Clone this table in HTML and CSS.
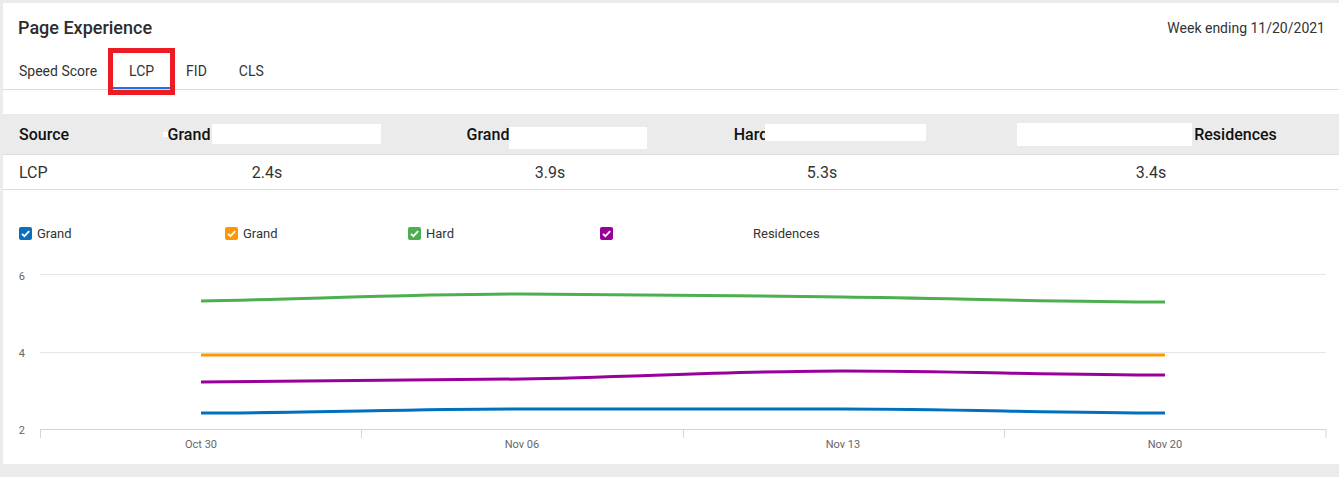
FILE: index.html
```html
<!DOCTYPE html>
<html lang="en">
<head>
<meta charset="utf-8">
<title>Page Experience</title>
<link rel="stylesheet" href="styles.css">
</head>
<body>
<div class="card">
  <div class="card-head">
    <h2 class="title">Page Experience</h2>
    <div class="week">Week ending 11/20/2021</div>
  </div>
  <nav class="tabs">
    <div class="tab">Speed Score</div>
    <div class="tab active">LCP<span class="highlight"></span></div>
    <div class="tab">FID</div>
    <div class="tab">CLS</div>
  </nav>

  <div class="table">
    <div class="trow thead">
      <div class="cell first">Source</div>
      <div class="cell c2"><span class="redact rdot"></span>Grand<span class="redact r1"></span></div>
      <div class="cell c3">Grand<span class="redact r2"></span></div>
      <div class="cell c4">Hard<span class="redact r3"></span></div>
      <div class="cell c5h"><span class="redact r4"></span>Residences</div>
    </div>
    <div class="trow tbody">
      <div class="cell first">LCP</div>
      <div class="cell">2.4s</div>
      <div class="cell">3.9s</div>
      <div class="cell">5.3s</div>
      <div class="cell c5">3.4s</div>
    </div>
  </div>

  <div class="legend">
    <div class="litem"><span class="cb blue"><svg viewBox="0 0 13 13"><path d="M3 6.8l2.4 2.4 4.8-5" /></svg></span>Grand</div>
    <div class="litem"><span class="cb orange"><svg viewBox="0 0 13 13"><path d="M3 6.8l2.4 2.4 4.8-5" /></svg></span>Grand</div>
    <div class="litem"><span class="cb green"><svg viewBox="0 0 13 13"><path d="M3 6.8l2.4 2.4 4.8-5" /></svg></span>Hard</div>
    <div class="litem"><span class="cb purple"><svg viewBox="0 0 13 13"><path d="M3 6.8l2.4 2.4 4.8-5" /></svg></span><span class="gap"></span>Residences</div>
  </div>

  <svg class="chart" viewBox="3 243 1336 221" width="1336" height="221">
    <g class="grid">
      <line x1="40" y1="274.5" x2="1326" y2="274.5"/>
      <line x1="40" y1="352.5" x2="1326" y2="352.5"/>
    </g>
    <g class="axis">
      <line x1="40" y1="429.5" x2="1326" y2="429.5"/>
      <line x1="40.5" y1="429" x2="40.5" y2="438"/>
      <line x1="361.5" y1="429" x2="361.5" y2="438"/>
      <line x1="683.5" y1="429" x2="683.5" y2="438"/>
      <line x1="1004.5" y1="429" x2="1004.5" y2="438"/>
      <line x1="1326" y1="429" x2="1326" y2="438"/>
    </g>
    <g class="ylab">
      <text x="25" y="280">6</text>
      <text x="25" y="357">4</text>
      <text x="25" y="434">2</text>
    </g>
    <g class="xlab">
      <text x="201" y="448">Oct 30</text>
      <text x="522" y="448">Nov 06</text>
      <text x="843" y="448">Nov 13</text>
      <text x="1165" y="448">Nov 20</text>
    </g>
    <g class="series">
      <path class="s-green" d="M201,301 C308,299 415,294 522,294 C629,294 736,295.7 843,297 C950,298.3 1058,302 1165,302"/>
      <path class="s-orange" d="M201,355 L1165,355"/>
      <path class="s-purple" d="M201,382 C308,382 415,380.8 522,379 C629,377.2 736,371 843,371 C950,371 1058,375 1165,375"/>
      <path class="s-blue" d="M201,413 C308,413 415,409 522,409 C629,409 736,409 843,409 C950,409 1058,413 1165,413"/>
    </g>
  </svg>
</div>
</body>
</html>
```

FILE: styles.css
```css
html, body {
  margin: 0;
  padding: 0;
}
body {
  background: #ebebeb;
  padding: 3px 0 0 3px;
  font-family: Roboto, "Liberation Sans", Arial, sans-serif;
  color: #333;
  height: 477px;
  box-sizing: border-box;
  overflow: hidden;
}
.card {
  background: #fff;
  height: 461px;
  overflow: hidden;
}
.card-head {
  display: flex;
  justify-content: space-between;
  align-items: center;
  height: 50px;
  padding: 0 14px 0 15px;
  box-sizing: border-box;
}
.title {
  margin: 0;
  font-size: 18px;
  font-weight: 500;
  color: #2d2d2d;
  line-height: 20px;
}
.week {
  font-size: 14px;
  color: #333;
}
.tabs {
  display: flex;
  height: 37px;
  border-bottom: 1px solid #dcdcdc;
  box-sizing: border-box;
}
.tab {
  position: relative;
  padding: 2px 16px 0;
  font-size: 14px;
  line-height: 32px;
  color: #333;
  border-bottom: 2px solid transparent;
}
.tab.active {
  border-bottom-color: #1a73e8;
}
.highlight {
  position: absolute;
  left: -5px;
  right: -5px;
  top: -5px;
  bottom: -8px;
  border: 5px solid #ed1c24;
}
.table {
  margin-top: 24px;
}
.trow {
  display: grid;
  grid-template-columns: 130px 268px 298px 246px 1fr;
  align-items: center;
  border-bottom: 1px solid #dcdcdc;
}
.thead {
  height: 41px;
  background: #ebebeb;
  font-size: 16px;
  font-weight: 500;
  color: #111;
  box-sizing: border-box;
}
.tbody {
  height: 35px;
  font-size: 16px;
  color: #333;
  box-sizing: border-box;
}
.cell {
  display: flex;
  align-items: center;
  justify-content: center;
}
.cell.first {
  justify-content: flex-start;
  padding-left: 16px;
}
.cell.c2 { padding-left: 10px; }
.cell.c3 { padding-left: 14px; }
.cell.c4 { padding-left: 16px; }
.cell.c5 { padding-left: 18px; }
.cell.c5h { padding-left: 10px; }
.redact {
  display: inline-block;
  background: #fff;
}
.rdot {
  width: 5px;
  height: 5px;
  align-self: flex-start;
  margin-top: 8px;
}
.r1 { width: 169px; height: 20px; margin-left: 2px; }
.r2 { width: 138px; height: 22px; margin-top: 8px; }
.r3 { width: 161px; height: 17px; margin-left: -3px; margin-top: -3px; }
.r4 { width: 175px; height: 23px; margin-right: 2px; }
.legend {
  display: grid;
  grid-template-columns: 206px 183px 192px auto;
  padding-left: 16px;
  margin-top: 33px;
  height: 20px;
  align-items: center;
  font-size: 13px;
  color: #333;
}
.litem {
  display: flex;
  align-items: center;
}
.cb {
  display: inline-block;
  width: 13px;
  height: 13px;
  border-radius: 2px;
  margin-right: 5px;
}
.cb svg {
  display: block;
  width: 13px;
  height: 13px;
  fill: none;
  stroke: #fff;
  stroke-width: 1.8;
}
.cb.blue { background: #0b6fbf; }
.cb.orange { background: #ff9800; }
.cb.green { background: #4caf50; }
.cb.purple { background: #990099; }
.gap {
  display: inline-block;
  width: 135px;
}
.chart {
  display: block;
}
.grid line {
  stroke: #e6e6e6;
  stroke-width: 1;
}
.axis line {
  stroke: #ccd6eb;
  stroke-width: 1;
}
.ylab text {
  font-size: 11px;
  fill: #666;
  text-anchor: end;
  font-family: Roboto, "Liberation Sans", sans-serif;
}
.xlab text {
  font-size: 11px;
  fill: #666;
  text-anchor: middle;
  font-family: Roboto, "Liberation Sans", sans-serif;
}
.series path {
  fill: none;
  stroke-width: 3;
}
.s-green { stroke: #4caf50; }
.s-orange { stroke: #ff9800; }
.s-purple { stroke: #990099; }
.s-blue { stroke: #0070c0; }
```
